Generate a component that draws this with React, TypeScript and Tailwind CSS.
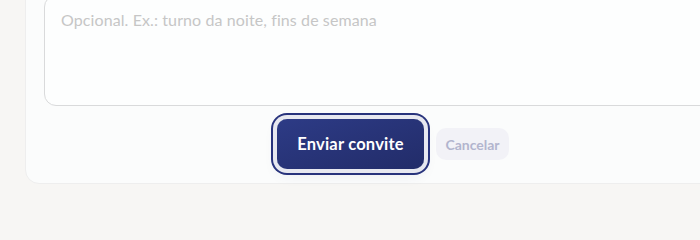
export default function App() {
  return (
    <div className="w-[700px] h-[240px] overflow-hidden bg-[#f7f6f4] font-['Lato','Noto_Sans',sans-serif]">
      <div className="ml-[25px] -mt-[20px] w-[736px] rounded-[14px] border border-[#eeeeee] bg-[#fbfcfc] px-[18px] pt-[14px] pb-[14px]">
        <textarea
          placeholder="Opcional. Ex.: turno da noite, fins de semana"
          className="block w-full h-[111px] resize-none rounded-[12px] border border-[#d9dadb] bg-[#fdfefe] px-[16px] py-[12px] text-[16px] tracking-[0.1px] leading-[24px] text-[#333] placeholder:text-[#c6c6c6] outline-none"
        />
        <div className="mt-[13px] flex items-center justify-center gap-[12px]">
          <button className="h-[50px] w-[147px] rounded-[10px] bg-gradient-to-br from-[#2d3b86] to-[#222c69] text-[16.5px] tracking-[0.2px] font-bold text-white ring-2 ring-[#28337c] ring-offset-4 ring-offset-[#e7e8f0] shadow-[0_6px_14px_rgba(40,50,120,0.08)]">
            Enviar convite
          </button>
          <button className="h-[32px] w-[73px] rounded-[10px] bg-[#f2f2f7] text-[14px] font-bold text-[#b2b5ce]">
            Cancelar
          </button>
        </div>
      </div>
    </div>
  );
}
